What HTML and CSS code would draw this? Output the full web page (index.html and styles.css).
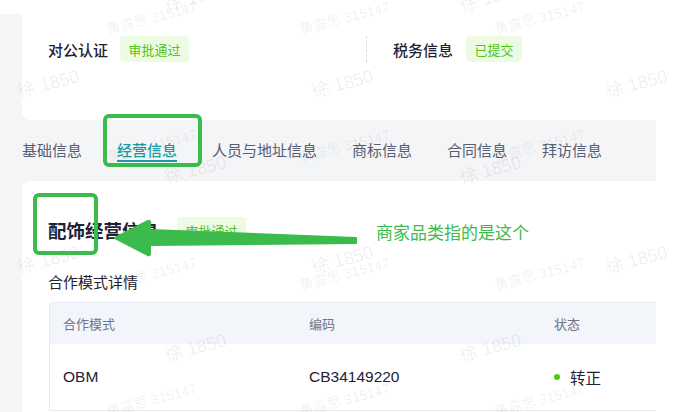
FILE: index.html
```html
<!DOCTYPE html>
<html lang="zh-CN">
<head>
    <meta charset="UTF-8">
    <meta name="viewport" content="width=device-width, initial-scale=1.0">
    <title>经营信息</title>
    <link rel="stylesheet" href="styles.css">
</head>
<body>
    <div class="main">
        <div class="card-top">
            <div class="info-item">
                <span class="info-label">对公认证</span>
                <span class="tag">审批通过</span>
            </div>
            <div class="info-item divided">
                <span class="info-label">税务信息</span>
                <span class="tag">已提交</span>
            </div>
        </div>

        <div class="tabs">
            <span class="tab">基础信息</span>
            <span class="tab active">经营信息</span>
            <span class="tab">人员与地址信息</span>
            <span class="tab">商标信息</span>
            <span class="tab">合同信息</span>
            <span class="tab">拜访信息</span>
        </div>

        <div class="card">
            <div class="section-title">
                <h2>配饰经营信息</h2>
                <span class="tag">审批通过</span>
            </div>
            <h3 class="sub-title">合作模式详情</h3>
            <div class="table">
                <div class="table-head">
                    <div class="cell">合作模式</div>
                    <div class="cell">编码</div>
                    <div class="cell">状态</div>
                </div>
                <div class="table-row">
                    <div class="cell">OBM</div>
                    <div class="cell">CB34149220</div>
                    <div class="cell"><span class="dot"></span>转正</div>
                </div>
            </div>
        </div>
    </div>

    <!-- watermark layer -->
    <div class="watermarks">
        <span class="wm big" style="left:165px;top:-4px">徐 1850</span>
        <span class="wm big" style="left:460px;top:-4px">徐 1850</span>
        <span class="wm big" style="left:18px;top:82px">徐 1850</span>
        <span class="wm big" style="left:312px;top:82px">徐 1850</span>
        <span class="wm big" style="left:606px;top:82px">徐 1850</span>
        <span class="wm big" style="left:165px;top:168px">徐 1850</span>
        <span class="wm big" style="left:460px;top:168px">徐 1850</span>
        <span class="wm big" style="left:18px;top:258px">徐 1850</span>
        <span class="wm big" style="left:312px;top:258px">徐 1850</span>
        <span class="wm big" style="left:606px;top:258px">徐 1850</span>
        <span class="wm big" style="left:165px;top:346px">徐 1850</span>
        <span class="wm big" style="left:460px;top:346px">徐 1850</span>

        <span class="wm" style="left:107px;top:22px">黄露思 315147</span>
        <span class="wm" style="left:300px;top:22px">黄露思 315147</span>
        <span class="wm" style="left:495px;top:22px">黄露思 315147</span>
        <span class="wm" style="left:107px;top:150px">黄露思 315147</span>
        <span class="wm" style="left:300px;top:150px">黄露思 315147</span>
        <span class="wm" style="left:495px;top:150px">黄露思 315147</span>
        <span class="wm" style="left:107px;top:278px">黄露思 315147</span>
        <span class="wm" style="left:300px;top:278px">黄露思 315147</span>
        <span class="wm" style="left:495px;top:278px">黄露思 315147</span>
        <span class="wm" style="left:107px;top:404px">黄露思 315147</span>
        <span class="wm" style="left:300px;top:404px">黄露思 315147</span>
        <span class="wm" style="left:495px;top:404px">黄露思 315147</span>
    </div>

    <!-- annotations drawn over the screenshot -->
    <div class="mark mark-tab"></div>
    <div class="mark mark-title"></div>
    <svg class="arrow" width="260" height="50" viewBox="0 0 260 50">
        <path d="M2 23 L35 6 Q37 5 37 8 L37 15 L243 23 L243 28 L37 30 L37 38 Q37 41 35 40 Z" fill="#3bbb4c" stroke="#3bbb4c" stroke-width="2" stroke-linejoin="round"/>
    </svg>
    <div class="note">商家品类指的是这个</div>
</body>
</html>
```

FILE: styles.css
```css
* {
    margin: 0;
    padding: 0;
    box-sizing: border-box;
    font-family: "Liberation Sans", "Noto Sans CJK SC", sans-serif;
}

body {
    width: 692px;
    height: 412px;
    overflow: hidden;
    background: #fff;
    position: relative;
}

.main {
    width: 656px;
    height: 398px;
    margin-top: 14px;
    padding-left: 22px;
    background: #f4f5f7;
}

.card-top {
    height: 106px;
    background: #fff;
    border-bottom-left-radius: 8px;
    padding: 22px 0 0 26px;
    display: grid;
    grid-template-columns: 318px 1fr;
    align-items: start;
}

.info-item {
    display: flex;
    align-items: center;
    gap: 12px;
    height: 26px;
}

.info-item.divided {
    border-left: 1px dashed #d8dce8;
    padding-left: 26px;
    gap: 13px;
}

.info-label {
    font-size: 15px;
    font-weight: 500;
    color: #1f2233;
}

.tag {
    display: inline-flex;
    align-items: center;
    height: 26px;
    padding: 0 8.5px;
    border-radius: 4px;
    background: #edfbe4;
    color: #52c41a;
    font-size: 13px;
}

.tabs {
    height: 61px;
    display: flex;
    gap: 35px;
    padding-top: 22px;
}

.tab {
    font-size: 15px;
    line-height: 18px;
    height: 20px;
    color: #575d74;
    border-bottom: 2px solid transparent;
}

.tab.active {
    color: #1a9ba5;
    font-weight: 500;
    border-bottom-color: #1a9ba5;
}

.card {
    height: 232px;
    background: #fff;
    border-top-left-radius: 8px;
    padding: 36px 0 0 26px;
}

.section-title {
    display: flex;
    align-items: center;
    gap: 18px;
    height: 26px;
}

.section-title h2 {
    font-size: 18.5px;
    font-weight: 700;
    color: #1f2233;
}

.sub-title {
    margin-top: 29px;
    font-size: 15px;
    line-height: 22px;
    font-weight: 400;
    color: #1f2233;
}

.table {
    margin: 8px 0 0 1px;
    border: 1px solid #e6e9f0;
    border-right: none;
    border-top-left-radius: 4px;
}

.table-head,
.table-row {
    display: grid;
    grid-template-columns: 259px 245px 1fr;
    align-items: center;
}

.table-head {
    height: 41px;
    background: #f2f5fa;
    border-top-left-radius: 4px;
}

.table-head .cell {
    font-size: 13px;
    color: #6f748b;
}

.table-row {
    height: 66px;
}

.table-row .cell {
    font-size: 15.5px;
    color: #1f2233;
    display: flex;
    align-items: center;
}

.cell {
    padding-left: 13px;
}

.table-head .cell:not(:first-child),
.table-row .cell:not(:first-child) {
    padding-left: 0;
}

.dot {
    width: 6px;
    height: 6px;
    border-radius: 50%;
    background: #52c41a;
    margin-right: 10px;
}

.watermarks {
    position: absolute;
    inset: 0;
    pointer-events: none;
}

.wm {
    position: absolute;
    font-size: 14px;
    line-height: 16px;
    color: rgba(0, 0, 0, 0.07);
    white-space: nowrap;
    transform-origin: left center;
    transform: rotate(-15deg);
}

.wm.big {
    font-size: 18px;
    line-height: 20px;
}

.mark {
    position: absolute;
    border: 4px solid #3bbb4c;
    border-radius: 6px;
}

.mark-tab {
    left: 103px;
    top: 114px;
    width: 99px;
    height: 53px;
}

.mark-title {
    left: 33px;
    top: 193px;
    width: 65px;
    height: 62px;
}

.arrow {
    position: absolute;
    left: 113px;
    top: 215px;
}

.note {
    position: absolute;
    left: 376px;
    top: 222px;
    font-size: 17px;
    line-height: 24px;
    color: #3bbb4c;
}
```
